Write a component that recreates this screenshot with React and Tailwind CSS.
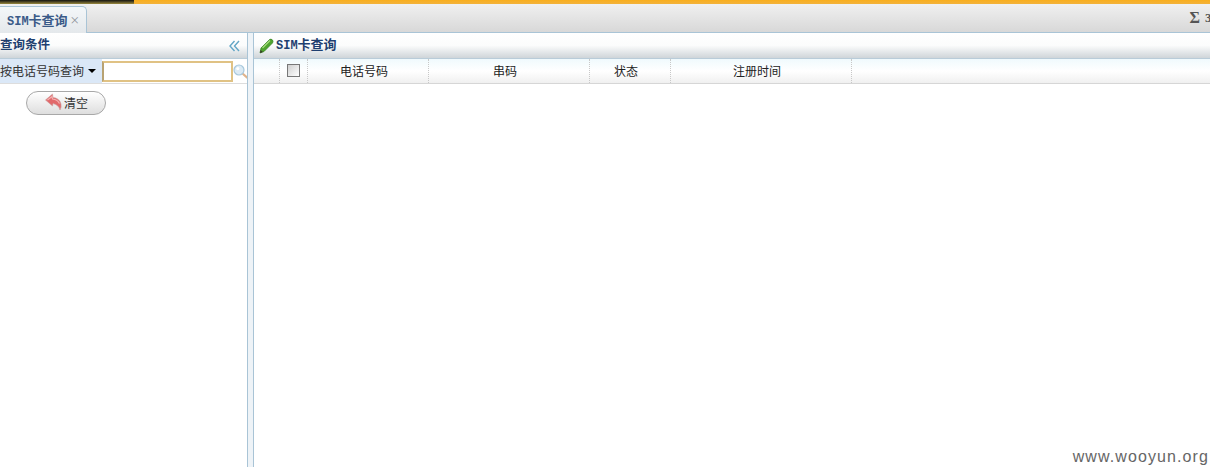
import React from 'react';

const cjk = "font-['Noto_Sans_CJK_SC','Liberation_Sans',sans-serif]";

const columns = [
  { title: '电话号码', width: 'w-[121px]' },
  { title: '串码', width: 'w-[161px]' },
  { title: '状态', width: 'w-[81px]' },
  { title: '注册时间', width: 'w-[181px]' },
];

function SimTitle({ className = '' }) {
  return (
    <span className={`whitespace-nowrap text-[13px] font-bold ${className}`}>
      <span className="font-['Liberation_Mono',monospace] text-[12px]">SIM</span>卡查询
    </span>
  );
}

function PanelTitle({ children, className = '' }) {
  return (
    <div className={`h-[26px] flex items-center bg-gradient-to-b from-white via-[#fbfcfc] to-[#cfd5d9] border-b border-[#b9ccd9] text-[#1f3f70] ${className}`}>
      {children}
    </div>
  );
}

function PencilIcon() {
  return (
    <svg width="15" height="16" viewBox="0 0 15 16">
      <path d="M1 15 L2 10 L10.5 1.5 Q12 0.5 13.5 2 Q14.5 3.5 13.5 5 L5 13.5 Z" fill="#4fa32e" stroke="#2f7d1c" strokeWidth="0.7" />
      <path d="M3.5 10 L11 2.5" stroke="#a6dc7c" strokeWidth="1.2" />
      <path d="M1 15 L1.6 12 L3.8 14 Z" fill="#3a3a2a" />
    </svg>
  );
}

function UndoIcon() {
  return (
    <svg width="19" height="18" viewBox="0 0 18 18">
      <path d="M1 7 L8 1 L8.5 4.5 Q15 5 16.5 11 Q17.2 14.5 15.5 17 Q14.5 12 8.5 10.5 L8 13 Z" fill="#e2696b" stroke="#c9a0a0" strokeWidth="0.6" />
      <path d="M3 7 L7.5 3.5 L8 6 Q13 6.5 15 10.5" stroke="#f4b3b3" strokeWidth="1.2" fill="none" />
    </svg>
  );
}

function LensIcon() {
  return (
    <svg width="15" height="15" viewBox="0 0 15 15" className="shrink-0">
      <path d="M9.5 9.5 L14.5 14" stroke="#e0b48c" strokeWidth="2.2" />
      <circle cx="6" cy="6" r="5" fill="#dceaf4" stroke="#a8c8dc" strokeWidth="1.2" />
      <circle cx="4.8" cy="4.6" r="1.6" fill="#ffffff" />
    </svg>
  );
}

function DoubleChevron() {
  return (
    <svg width="11" height="12" viewBox="0 0 11 12">
      <path d="M5.5 1 L1 6 L5.5 11 M10 1 L5.5 6 L10 11" stroke="#62a6c6" strokeWidth="1.4" fill="none" />
    </svg>
  );
}

export default function App() {
  return (
    <div className={`relative w-[1210px] h-[467px] overflow-hidden bg-white flex flex-col ${cjk}`}>
      {/* top strip */}
      <div className="h-[4px] flex shrink-0">
        <div className="w-[134px] bg-gradient-to-b from-[#15150f] to-[#9c8a3c]" />
        <div className="flex-1 bg-gradient-to-b from-[#f9ae1a] to-[#f2b23a]" />
      </div>

      {/* tab bar */}
      <div className="h-[29px] shrink-0 flex items-end justify-between bg-gradient-to-b from-[#f0f0f0] to-[#d8d8d8] border-b border-[#a9c4d6]">
        <div className="w-[87px] h-[27px] -mb-px flex items-center pl-[7px] gap-[2px] bg-gradient-to-b from-[#f4f7f9] to-[#e4e8eb] border border-l-0 border-b-0 border-[#a9c4d6] rounded-tr-[5px]">
          <SimTitle className="text-[#3a5a88]" />
          <span className="text-[10px] text-[#8a8f96] leading-none">×</span>
        </div>
        <div className="h-full flex items-center gap-[5px] pb-[1px] text-[16px] font-bold text-[#555555] font-['Liberation_Serif',serif]">
          <span>Σ</span>
          <span className="w-[5px] overflow-hidden text-[13px]">3</span>
        </div>
      </div>

      <div className="flex-1 flex min-h-0">
        {/* left panel */}
        <div className="w-[248px] shrink-0 flex flex-col border-r border-[#a9c4d6]">
          <PanelTitle className="justify-between pr-[7px]">
            <span className="text-[12.5px] font-bold pb-[2px]">查询条件</span>
            <DoubleChevron />
          </PanelTitle>
          <div className="h-[25px] flex items-center border-b border-[#dddddd] bg-white overflow-hidden">
            <div className="w-[102px] shrink-0 h-full flex items-center bg-[#dbe8f7] text-[12px] text-[#333333] whitespace-nowrap">
              <span>按电话号码查询</span>
              <span className="ml-[4px] w-0 h-0 border-x-[4px] border-x-transparent border-t-[4px] border-t-black" />
            </div>
            <div className="w-[131px] shrink-0 h-[21px] border-2 border-[#e0c284] border-l-[#b8a272] bg-white" />
            <LensIcon />
          </div>
          <div className="pl-[26px] pt-[7px]">
            <button className="w-[80px] h-[24px] flex items-center justify-center gap-[1px] rounded-full border border-[#a8a8a8] bg-gradient-to-b from-white to-[#dedede] text-[12px] text-[#333333]">
              <span className="-mt-[3px]"><UndoIcon /></span>
              <span>清空</span>
            </button>
          </div>
        </div>

        {/* sash */}
        <div className="w-[5px] shrink-0 bg-[#eef3f7]" />

        {/* right panel */}
        <div className="flex-1 flex flex-col border-l border-[#a9c4d6]">
          <PanelTitle className="pl-[5px] gap-[2px]">
            <PencilIcon />
            <SimTitle className="pb-[2px]" />
          </PanelTitle>
          <div className="h-[25px] flex bg-gradient-to-b from-[#f0fafd] via-white to-[#f0f0f0] border-b border-[#d6d6d6] text-[12px] text-[#222222]">
            <div className="w-[26px] border-r border-dotted border-[#c8c8c8]" />
            <div className="w-[28px] flex items-center justify-center border-r border-dotted border-[#c8c8c8]">
              <span className="w-[13px] h-[13px] -mt-[2px] border border-[#777777] bg-gradient-to-br from-[#cfcfcf] to-white" />
            </div>
            {columns.map((col) => (
              <div key={col.title} className={`${col.width} flex items-center justify-center pr-[8px] border-r border-dotted border-[#c8c8c8]`}>
                {col.title}
              </div>
            ))}
          </div>
          <div className="flex-1 bg-white" />
        </div>
      </div>

      {/* watermark */}
      <div className="absolute right-[1px] bottom-[-2px] text-[16px] text-[#666666] font-['Liberation_Sans',sans-serif] tracking-[1.1px]">
        www.wooyun.org
      </div>
    </div>
  );
}
